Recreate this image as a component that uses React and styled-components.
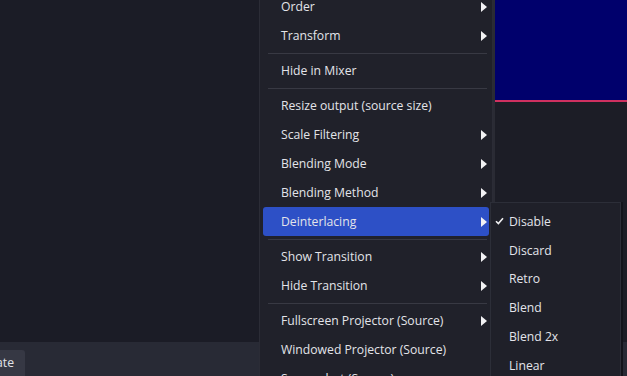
import React from "react";
import styled, { createGlobalStyle } from "styled-components";

const GlobalStyle = createGlobalStyle`
  html, body {
    margin: 0;
    padding: 0;
    background: #1b1c26;
  }
  body {
    font-family: "Open Sans", "Noto Sans", sans-serif;
  }
`;

const MAIN_ITEMS = [
  { label: "Order", sub: true },
  { label: "Transform", sub: true },
  { sep: true },
  { label: "Hide in Mixer" },
  { sep: true },
  { label: "Resize output (source size)" },
  { label: "Scale Filtering", sub: true },
  { label: "Blending Mode", sub: true },
  { label: "Blending Method", sub: true },
  { label: "Deinterlacing", sub: true, active: true },
  { sep: true },
  { label: "Show Transition", sub: true },
  { label: "Hide Transition", sub: true },
  { sep: true },
  { label: "Fullscreen Projector (Source)", sub: true },
  { label: "Windowed Projector (Source)" },
  { label: "Screenshot (Source)" },
];

const DEINTERLACE_ITEMS = [
  { label: "Disable", checked: true },
  { label: "Discard" },
  { label: "Retro" },
  { label: "Blend" },
  { label: "Blend 2x" },
  { label: "Linear" },
  { label: "Linear 2x" },
];

const Arrow = () => (
  <svg width="6" height="10" viewBox="0 0 6 10">
    <path d="M0 0 L6 5 L0 10 Z" fill="#f2f2f4" />
  </svg>
);

const Check = () => (
  <svg width="9" height="8" viewBox="0 0 9 8">
    <path
      d="M1 4.2 L3.4 6.6 L8 1.2"
      fill="none"
      stroke="#f0f0f2"
      strokeWidth="1.6"
    />
  </svg>
);

const App = () => {
  return (
    <>
      <GlobalStyle />
      <Page>
        <Main>
          <Workspace />
          <Splitter />
          <PreviewColumn>
            <PreviewCanvas />
            <PreviewEdge />
            <PreviewRest />
          </PreviewColumn>
        </Main>
        <BottomBar>
          <BarButton>Activate</BarButton>
        </BottomBar>

        <ContextMenu>
          {MAIN_ITEMS.map((item, i) =>
            item.sep ? (
              <Separator key={i} />
            ) : (
              <MenuItem key={i} active={item.active}>
                <span>{item.label}</span>
                {item.sub && <Arrow />}
              </MenuItem>
            ),
          )}
        </ContextMenu>

        <SubMenu>
          {DEINTERLACE_ITEMS.map((item) => (
            <SubItem key={item.label}>
              <CheckSlot>{item.checked && <Check />}</CheckSlot>
              {item.label}
            </SubItem>
          ))}
        </SubMenu>
      </Page>
    </>
  );
};

const Page = styled.div`
  position: relative;
  width: 627px;
  height: 376px;
  overflow: hidden;
  display: flex;
  flex-direction: column;
  background: #1b1c26;
`;

const Main = styled.div`
  flex: 1;
  display: flex;
`;

const Workspace = styled.div`
  flex: 1;
  background: #1b1c26;
`;

const Splitter = styled.div`
  width: 4px;
  background: #2a2b34;
`;

const PreviewColumn = styled.div`
  width: 132px;
  display: flex;
  flex-direction: column;
`;

const PreviewCanvas = styled.div`
  height: 100px;
  background: #00006c;
`;

const PreviewEdge = styled.div`
  height: 2px;
  background: #cf3060;
  box-shadow: 0 1px 0 #5a1a2c;
`;

const PreviewRest = styled.div`
  flex: 1;
  background: #1c1d26;
`;

const BottomBar = styled.div`
  height: 34px;
  background: #282a35;
  display: flex;
  align-items: flex-end;
`;

const BarButton = styled.div`
  height: 26px;
  margin-left: -41px;
  padding: 0 11px 0 10px;
  background: #363844;
  border-radius: 3px 3px 0 0;
  color: #e2e3e8;
  font-size: 12.2px;
  line-height: 26px;
  box-sizing: border-box;
`;

const ContextMenu = styled.div`
  position: absolute;
  left: 259px;
  top: -13px;
  width: 234px;
  box-sizing: border-box;
  padding: 4px 3px;
  background: #20212a;
  border: 1px solid #2b2c36;
  display: flex;
  flex-direction: column;
`;

const MenuItem = styled.div`
  flex: none;
  height: 29px;
  padding: 0 2px 0 18px;
  display: flex;
  align-items: center;
  justify-content: space-between;
  border-radius: 3px;
  font-size: 12.2px;
  color: #e3e4e9;
  background: ${(props) => (props.active ? "#2d50c6" : "transparent")};
`;

const Separator = styled.div`
  flex: none;
  height: 1px;
  margin: 2.5px 2px 2.5px 5px;
  background: #383943;
`;

const SubMenu = styled.div`
  position: absolute;
  left: 490px;
  top: 202px;
  width: 131px;
  box-sizing: border-box;
  padding: 4px 0;
  background: #1f2029;
  border: 1px solid #2c2e38;
  box-shadow: 2px 0 0 #13141b;
  display: flex;
  flex-direction: column;
`;

const SubItem = styled.div`
  flex: none;
  height: 28.8px;
  display: flex;
  align-items: center;
  font-size: 12.2px;
  color: #e3e4e9;
`;

const CheckSlot = styled.span`
  width: 14px;
  padding-left: 4px;
  display: flex;
  align-items: center;
`;

export default App;
